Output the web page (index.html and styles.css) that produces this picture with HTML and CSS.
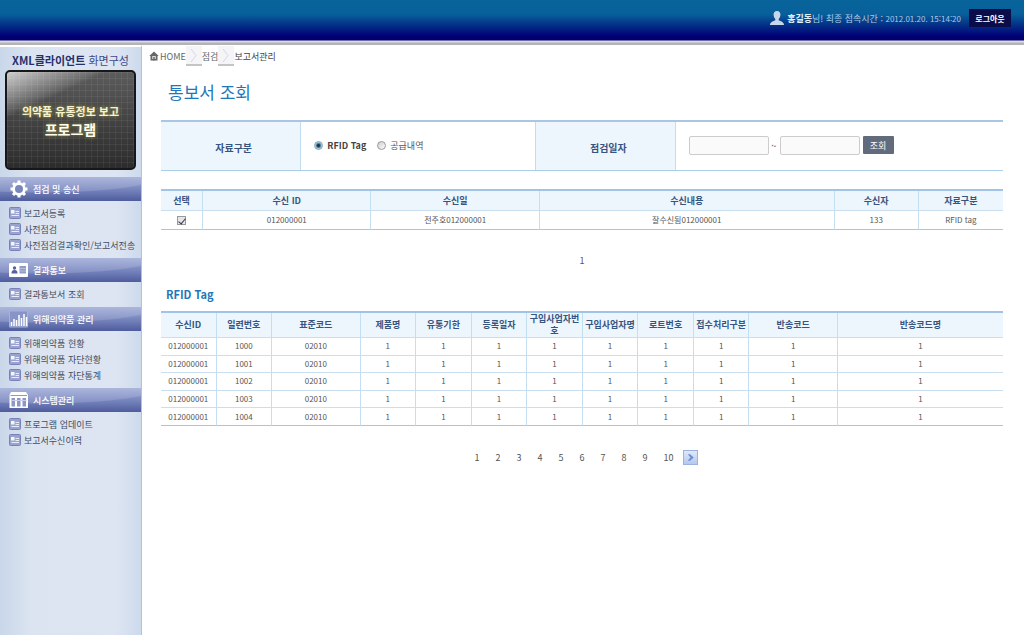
FILE: index.html
```html
<!DOCTYPE html>
<html lang="ko">
<head>
<meta charset="utf-8">
<title>통보서 조회</title>
<link rel="stylesheet" href="styles.css">
</head>
<body>
<svg class="defs" aria-hidden="true">
  <symbol id="doc" viewBox="0 0 12 12">
    <rect x=".5" y=".5" width="11" height="11" rx="1" fill="#9aa3d0" stroke="#7882b8"/>
    <path d="M6.500 4.500H10M6.500 6.500H10M2.500 8.500H10" stroke="#e9ecf9" stroke-width="1"/>
    <path d="M2 3h3.500v3.500H2z" fill="#f4f6fd"/>
  </symbol>
</svg>
<header class="topbar">
  <svg class="user" viewBox="0 0 16 16"><path d="M8 1c2.500 0 3.600 1.800 3.400 4-.2 2-.9 3.200-1.700 4v1.200c1 .7 5.300 1.300 5.300 4.800H1c0-3.500 4.300-4.100 5.300-4.800V9c-.8-.8-1.500-2-1.700-4C4.400 2.800 5.500 1 8 1z" fill="#c9d6ea"/></svg>
  <p class="login"><b>홍길동</b>님! 최종 접속시간 : <time>2012.01.20. 15:14:20</time></p>
  <button class="logout" type="button">로그아웃</button>
</header>
<div class="layout">
  <aside class="sidebar">
    <h2 class="side-title"><b>XML클라이언트</b> 화면구성</h2>
    <div class="screen"><span class="screen-sub">의약품 유통정보 보고</span><span class="screen-main">프로그램</span></div>
    <nav>
      <section class="group">
        <h3><svg viewBox="0 0 20 18"><g transform="translate(10 9)"><g fill="#fff"><g id="teeth"><rect x="-1.500" y="-8.500" width="3" height="17"/><rect x="-8.500" y="-1.500" width="17" height="3"/></g><use href="#teeth" transform="rotate(45)"/><circle r="6.800"/></g><circle r="4" fill="#7a87bd"/></g></svg>점검 및 송신</h3>
        <ul>
          <li><a href="#"><svg><use href="#doc"/></svg>보고서등록</a></li>
          <li><a href="#"><svg><use href="#doc"/></svg>사전점검</a></li>
          <li><a href="#"><svg><use href="#doc"/></svg>사전점검결과확인/보고서전송</a></li>
        </ul>
      </section>
      <section class="group">
        <h3><svg viewBox="0 0 20 18"><rect x="0" y="2" width="19" height="14" rx="1" fill="#fff"/><circle cx="5.500" cy="7" r="1.700" fill="#56629e"/><path d="M2.500 12.500c0-3 1.500-3.500 3-3.500s3 .5 3 3.500z" fill="#56629e"/><rect x="10.500" y="5" width="6.500" height="7.500" fill="#929cc9"/><path d="M10.500 7.500h6.500M10.500 10h6.500" stroke="#c5cbe5" stroke-width=".7"/></svg>결과통보</h3>
        <ul>
          <li><a href="#"><svg><use href="#doc"/></svg>결과통보서 조회</a></li>
        </ul>
      </section>
      <section class="group">
        <h3><svg viewBox="0 0 20 18"><path d="M.5 1v16h18V1z" fill="#8894c8" stroke="#a7b0da"/><path d="M2.500 16v-4M5 16V9M7.500 16v-6M10 16V5M12.500 16V8M15 16V4M17.500 16V7" stroke="#fff" stroke-width="1.500"/></svg>위해의약품 관리</h3>
        <ul>
          <li><a href="#"><svg><use href="#doc"/></svg>위해의약품 현황</a></li>
          <li><a href="#"><svg><use href="#doc"/></svg>위해의약품 자단현황</a></li>
          <li><a href="#"><svg><use href="#doc"/></svg>위해의약품 자단통계</a></li>
        </ul>
      </section>
      <section class="group">
        <h3><svg viewBox="0 0 20 18"><path d="M2 1h15l2 3v13H.5V4z" fill="#fff"/><path d="M1.500 4.500h16.500" stroke="#8d98c9"/><path d="M2.500 7v8.500H6V7zM8 7v8.500h3.500V7zM13.500 7v8.500H17V7z" fill="#8d98c9"/><path d="M2 9.500h15.500" stroke="#c9cfe8"/></svg>시스템관리</h3>
        <ul>
          <li><a href="#"><svg><use href="#doc"/></svg>프로그램 업데이트</a></li>
          <li><a href="#"><svg><use href="#doc"/></svg>보고서수신이력</a></li>
        </ul>
      </section>
    </nav>
  </aside>
  <main class="content">
    <nav class="crumbs" aria-label="위치">
      <svg class="home" viewBox="0 0 10 10"><path d="M5 .5L.3 5h1.200v4.500h7V5h1.200z" fill="#666"/><path d="M3.200 5h3.600v3H3.200z" fill="#ddd"/><path d="M4.300 6h1.400v3.500H4.300z" fill="#666"/></svg>
      <a href="#">HOME</a>
      <svg class="sep" viewBox="0 0 16 20"><rect width="16" height="19" fill="#f5f5f7"/><path d="M0 19h16" stroke="#c4c4c8" stroke-width="2"/><path d="M5 3l5 6.500L5 16" fill="none" stroke="#d3d7e8"/></svg>
      <a href="#">점검</a>
      <svg class="sep" viewBox="0 0 16 20"><rect width="16" height="19" fill="#f5f5f7"/><path d="M0 19h16" stroke="#c4c4c8" stroke-width="2"/><path d="M5 3l5 6.500L5 16" fill="none" stroke="#d3d7e8"/></svg>
      <span class="here">보고서관리</span>
    </nav>
    <h1>통보서 조회</h1>
    <form class="filter">
      <div class="label" id="kind">자료구분</div>
      <div class="field kinds" role="radiogroup" aria-labelledby="kind">
        <label class="on"><input type="radio" name="kind" checked>RFID Tag</label>
        <label><input type="radio" name="kind">공급내역</label>
      </div>
      <div class="label">점검일자</div>
      <div class="field dates">
        <input type="text" aria-label="점검일자 시작"><span>~</span><input type="text" aria-label="점검일자 끝"><button type="button">조회</button>
      </div>
    </form>
    <table class="grid received">
      <colgroup><col class="w5"><col class="w20"><col class="w20"><col class="w35"><col class="w10"><col class="w10"></colgroup>
      <thead><tr><th>선택</th><th>수신 ID</th><th>수신일</th><th>수신내용</th><th>수신자</th><th>자료구분</th></tr></thead>
      <tbody><tr><td><input type="checkbox" aria-label="선택" checked></td><td>012000001</td><td>전주호012000001</td><td>잘수신됨012000001</td><td>133</td><td>RFID tag</td></tr></tbody>
    </table>
    <div class="pager single"><a href="#">1</a></div>
    <h2 class="section-title">RFID Tag</h2>
    <table class="grid tags">
      <colgroup><col class="n"><col class="n"><col class="m"><col class="n"><col class="n"><col class="n"><col class="n"><col class="n"><col class="n"><col class="n"><col class="m"><col></colgroup>
      <thead><tr><th>수신ID</th><th>일련번호</th><th>표준코드</th><th>제품명</th><th>유통기한</th><th>등록일자</th><th>구입사업자번호</th><th>구입사업자명</th><th>로트번호</th><th>접수처리구분</th><th>반송코드</th><th>반송코드명</th></tr></thead>
      <tbody>
        <tr><td>012000001</td><td>1000</td><td>02010</td><td>1</td><td>1</td><td>1</td><td>1</td><td>1</td><td>1</td><td>1</td><td>1</td><td>1</td></tr>
        <tr><td>012000001</td><td>1001</td><td>02010</td><td>1</td><td>1</td><td>1</td><td>1</td><td>1</td><td>1</td><td>1</td><td>1</td><td>1</td></tr>
        <tr><td>012000001</td><td>1002</td><td>02010</td><td>1</td><td>1</td><td>1</td><td>1</td><td>1</td><td>1</td><td>1</td><td>1</td><td>1</td></tr>
        <tr><td>012000001</td><td>1003</td><td>02010</td><td>1</td><td>1</td><td>1</td><td>1</td><td>1</td><td>1</td><td>1</td><td>1</td><td>1</td></tr>
        <tr><td>012000001</td><td>1004</td><td>02010</td><td>1</td><td>1</td><td>1</td><td>1</td><td>1</td><td>1</td><td>1</td><td>1</td><td>1</td></tr>
      </tbody>
    </table>
    <nav class="pager" aria-label="페이지">
      <a href="#">1</a><a href="#">2</a><a href="#">3</a><a href="#">4</a><a href="#">5</a><a href="#">6</a><a href="#">7</a><a href="#">8</a><a href="#">9</a><a class="wide" href="#">10</a>
      <button class="next" type="button" aria-label="다음"><svg viewBox="0 0 14 14"><path d="M4 3.500h2.500L10.500 7l-4 3.500H4L7 7z" fill="#6d8fd0"/></svg></button>
    </nav>
  </main>
</div>
</body>
</html>
```
FILE: styles.css
```css
* { box-sizing: border-box; }
body {
  margin: 0;
  min-height: 100vh;
  display: flex;
  flex-direction: column;
  font-family: "Noto Sans CJK KR", sans-serif;
  font-size: 9px;
  color: #555;
  background: #fff;
}
h1, h2, h3, p, ul { margin: 0; padding: 0; }
ul { list-style: none; }
a { color: inherit; text-decoration: none; }
button { font-family: inherit; padding: 0; border: 0; cursor: pointer; }
svg { display: block; flex: none; }
.defs { position: absolute; width: 0; height: 0; }

.topbar {
  height: 45px;
  padding: 0 13px 9px 0;
  display: flex;
  align-items: center;
  justify-content: flex-end;
  color: #a9c9e6;
  background: linear-gradient(#08649b 0, #08609a 14px, #000075 36px, #00006a 40px, #d9d9ec 41px, #d9d9ec 42px, #b3b3b3 43px, #b3b3b3 45px);
}
.user { width: 16px; height: 16px; margin-right: 2px; }
.login b { color: #e2effa; }
.login time { font-size: 8px; }
.logout {
  width: 42px;
  height: 18px;
  margin-left: 8px;
  font-size: 8px;
  font-weight: bold;
  color: #fff;
  background: #0b0d4b;
}

.layout { flex: 1; display: flex; }
.sidebar {
  width: 142px;
  flex: none;
  border-top: 2px solid #fff;
  border-right: 1px solid #b4c0de;
  background: linear-gradient(90deg, #c9d7ea, #dbe4f0 22%, #dde5f2 82%, #cddaec);
}
.side-title {
  height: 23px;
  padding-top: 5px;
  line-height: 16px;
  font-size: 11px;
  font-weight: normal;
  text-align: center;
  white-space: nowrap;
  color: #3c4a86;
}
.side-title b { color: #26306c; }
.screen {
  margin: 0 5px 7px;
  height: 100px;
  display: flex;
  flex-direction: column;
  align-items: center;
  justify-content: center;
  border: 2px solid #17171a;
  border-radius: 5px;
  font-weight: bold;
  white-space: nowrap;
  background:
    linear-gradient(155deg, rgba(255,255,255,.7) 0, rgba(255,255,255,.12) 26%, rgba(255,255,255,0) 30%),
    repeating-linear-gradient(90deg, rgba(255,255,255,.06) 0 1px, transparent 1px 6px),
    repeating-linear-gradient(rgba(255,255,255,.06) 0 1px, transparent 1px 6px),
    linear-gradient(#5c5c5c, #3e3e3e 60%, #2c2c2c);
}
.screen-sub { font-size: 11px; line-height: 18px; color: #f6f4cf; text-shadow: 0 0 4px #a6a14e; }
.screen-main { font-size: 14px; line-height: 19px; color: #fffef0; text-shadow: 0 0 4px #a6a14e; }
.group h3 {
  height: 24px;
  padding-left: 9px;
  display: flex;
  align-items: center;
  gap: 4px;
  font-size: 9px;
  font-weight: 500;
  color: #fff;
  background:
    radial-gradient(ellipse 120px 16px at 40px 0, rgba(255,255,255,.14) 94%, transparent),
    linear-gradient(#9eaad6, #7482bc 55%, #4f5c9d);
}
.group h3 svg { width: 20px; height: 18px; }
.group ul { padding: 4px 0 5px 9px; }
.group a {
  height: 16px;
  display: flex;
  align-items: center;
  gap: 3px;
  white-space: nowrap;
  color: #444d60;
}
.group a svg { width: 12px; height: 12px; }

.content { flex: 1; min-width: 0; padding: 1px 21px 20px 19px; }
.crumbs { display: flex; align-items: center; height: 20px; margin-left: -12px; font-size: 9px; }
.crumbs a { color: #666; }
.home { width: 10px; height: 10px; margin-right: 1px; }
.sep { width: 16px; height: 20px; }
.here { color: #444; }
h1 { margin: 13px 0 15px 7px; line-height: 26px; font-size: 17px; font-weight: normal; color: #1e78b8; }

.filter {
  display: grid;
  grid-template-columns: 3fr 5fr 3fr 7fr;
  height: 51px;
  border-top: 2px solid #a9c6e2;
  border-bottom: 1px solid #a9cfe8;
}
.label {
  display: flex;
  align-items: center;
  justify-content: center;
  padding: 2px 0 0 6px;
  font-size: 10px;
  font-weight: bold;
  color: #37547f;
  background: #eef6fd;
  border-right: 1px solid #c3ddf0;
}
.field + .label { border-left: 1px solid #c3ddf0; }
.field { display: flex; align-items: center; padding: 0 0 2px 13px; }
.kinds { gap: 11px; }
.kinds label { display: flex; align-items: center; gap: 4px; }
.kinds .on { font-weight: bold; color: #444; }
.kinds input {
  appearance: none;
  width: 9px;
  height: 9px;
  margin: 0;
  border: 1px solid #999;
  border-radius: 50%;
  background: linear-gradient(135deg, #ccc, #fff);
}
.kinds input:checked { border-color: #8aa3b8; background: radial-gradient(#1b3447 0 1px, #8fc3e2 3px, #e6f2f9 4px); }
.dates input {
  width: 80px;
  height: 19px;
  border: 1px solid #ccc;
  border-radius: 2px;
  background: #fafafa;
}
.dates span { width: 11px; text-align: center; color: #333; }
.dates button { width: 31px; height: 18px; margin-left: 3px; font-size: 9px; color: #fff; background: #626b7c; border-radius: 1px; }

.grid {
  width: 100%;
  table-layout: fixed;
  border-collapse: separate;
  border-spacing: 0;
  border-top: 2px solid #a2c3e8;
  text-align: center;
}
.grid th, .grid td { padding: 0; border-bottom: 1px solid #c9deef; border-right: 1px solid #c5dff2; }
.grid th:last-child, .grid td:last-child { border-right: 0; }
.grid th { font-size: 9px; line-height: 12px; color: #37547f; background: #eef6fd; word-break: break-all; }
.grid td { font-size: 8px; line-height: 12px; }
.grid tbody tr:last-child td { border-bottom-color: #a9c6e0; }
.received { margin-top: 18px; }
.received th { height: 20px; }
.received td { height: 19px; }
.received input {
  appearance: none;
  display: block;
  width: 9px;
  height: 9px;
  margin: 0 auto;
  border: 1px solid #999;
  background: #e4e6ea;
}
.received input:checked::before {
  content: "";
  display: block;
  width: 3px;
  height: 6px;
  margin: 0 2px;
  border: solid #334;
  border-width: 0 1px 1px 0;
  transform: rotate(40deg);
}
.w5 { width: 5%; }
.w10 { width: 10%; }
.w20 { width: 20%; }
.w35 { width: 35%; }
.n { width: 6.6%; }
.m { width: 10.5%; }
.tags { height: 115px; }
.tags th { height: 25px; }
.section-title { margin: 0 0 8px 5px; line-height: 18px; font-size: 11px; color: #1e78b8; }

.pager { display: flex; justify-content: center; align-items: center; height: 14px; margin-top: 24px; font-size: 9px; }
.pager a { width: 21px; text-align: center; }
.pager .wide { width: 26px; }
.pager.single { margin: 23px 0 18px; }
.next { width: 15px; height: 15px; margin-left: 1px; border: 1px solid #9db3df; background: linear-gradient(#dfe8f8, #b5c9ee); }
.next svg { width: 13px; height: 13px; }
```
